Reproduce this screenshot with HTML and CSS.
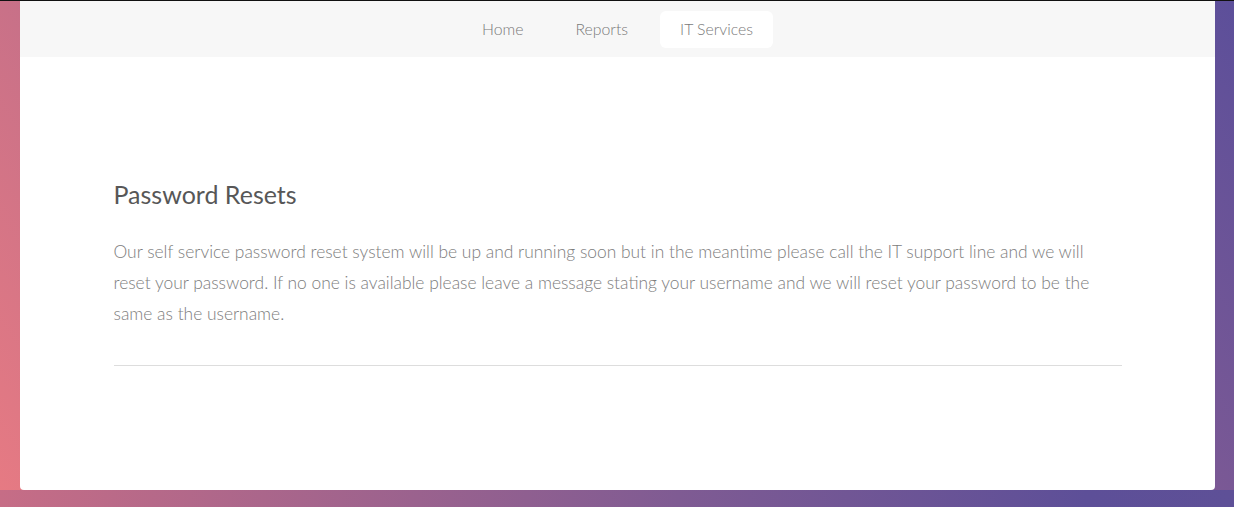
FILE: index.html
```html
<!DOCTYPE html>
<html lang="en">
<head>
<meta charset="utf-8">
<title>IT Services</title>
<link rel="stylesheet" href="styles.css">
</head>
<body>
<div class="page">
  <div class="card">
    <nav class="nav">
      <a class="nav-item" href="#">Home</a>
      <a class="nav-item" href="#">Reports</a>
      <a class="nav-item active" href="#">IT Services</a>
    </nav>
    <main class="content">
      <h2 class="title">Password Resets</h2>
      <p class="text">Our self service password reset system will be up and running soon but in the meantime please call the IT support line and we will reset your password. If no one is available please leave a message stating your username and we will reset your password to be the same as the username.</p>
      <hr class="rule">
    </main>
  </div>
</div>
<div class="footer-strip"></div>
</body>
</html>
```
FILE: styles.css
```css
* { box-sizing: border-box; }
html, body { margin: 0; padding: 0; }
body {
  font-family: Lato, "Noto Sans", sans-serif;
  background: #5e5097;
  height: 507px;
  overflow: hidden;
}
.page {
  height: 490px;
  border-top: 1px solid #111;
  padding: 0 19px 0 20px;
  background: linear-gradient(56deg, #e67a83 0%, #5c4f9a 100%);
}
.card {
  height: 489px;
  background: #fff;
  border-radius: 0 0 4px 4px;
  overflow: hidden;
}
.nav {
  height: 56px;
  background: #f7f7f7;
  display: flex;
  justify-content: center;
  align-items: center;
  gap: 12px;
}
.nav-item {
  display: block;
  padding: 0 20px 2px;
  height: 37px;
  line-height: 35px;
  font-size: 15.8px;
  font-weight: 300;
  color: #7a7a7a;
  text-decoration: none;
  border-radius: 6px;
}
.nav-item.active { background: #fff; }
.content {
  width: 1008px;
  margin: 0 auto;
  padding-top: 121px;
}
.title {
  margin: 0;
  font-size: 25px;
  font-weight: 400;
  line-height: 32px;
  color: #575757;
}
.text {
  margin: 26px 0 0;
  font-size: 17.4px;
  font-weight: 300;
  line-height: 31px;
  color: #7d7d7d;
}
.rule {
  margin: 36px 0 0;
  border: 0;
  border-top: 1px solid #ddd;
}
.footer-strip {
  height: 17px;
  background: linear-gradient(90deg, #c66d86 0%, #7f5b93 55%, #5d4f98 88%, #5e5097 100%);
}
```
